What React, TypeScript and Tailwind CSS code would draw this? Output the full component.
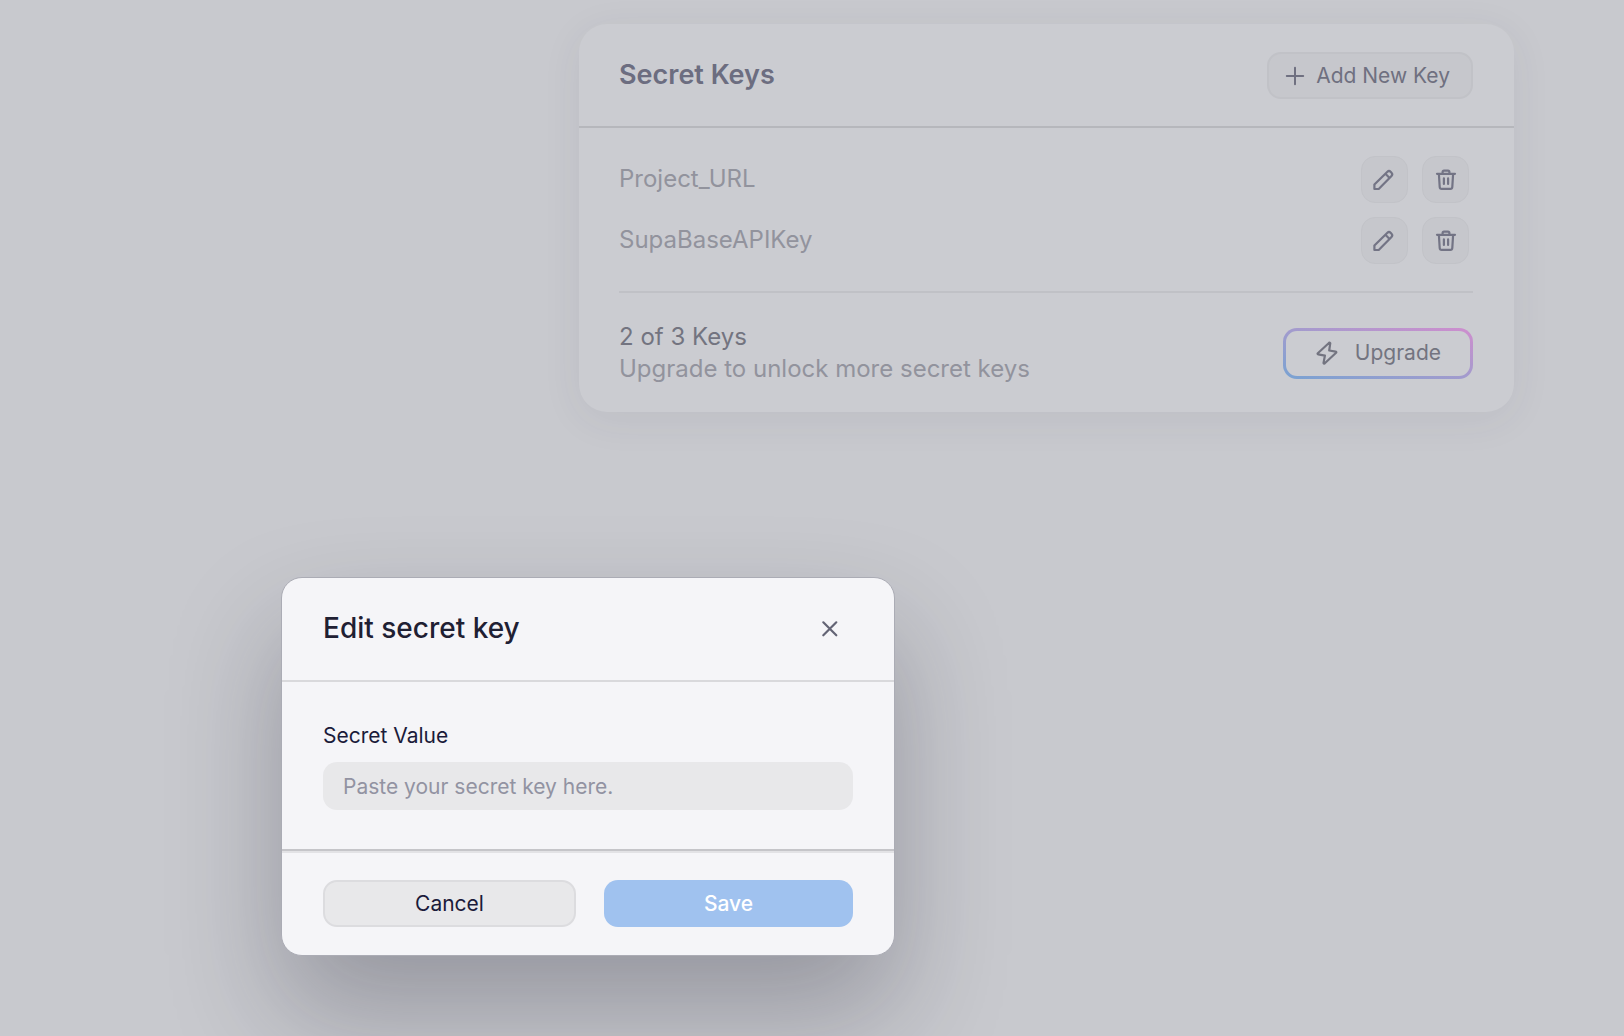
import type { ReactNode } from "react";

const TEXT = {
  title: "Secret Keys",
  addKey: "Add New Key",
  usage: "2 of 3 Keys",
  upgradeHint: "Upgrade to unlock more secret keys",
  upgrade: "Upgrade",
  dialogTitle: "Edit secret key",
  secretValue: "Secret Value",
  placeholder: "Paste your secret key here.",
  cancel: "Cancel",
  save: "Save",
};

const secretKeys = ["Project_URL", "SupaBaseAPIKey"];

function PlusIcon() {
  return (
    <svg className="h-5 w-5" viewBox="0 0 20 20" fill="none" stroke="currentColor" strokeWidth="2" strokeLinecap="round" aria-hidden="true">
      <path d="M10 1.800v16.400M1.800 10h16.400" />
    </svg>
  );
}

function PencilIcon() {
  return (
    <svg className="h-6 w-6" viewBox="2 0 24 24" fill="none" stroke="currentColor" strokeWidth="2.2" strokeLinejoin="round" aria-hidden="true">
      <path d="M3.400 21v-4.500L16.400 3.800a2.300 2.300 0 0 1 3.200 0l.9.9a2.300 2.300 0 0 1 0 3.200L7.700 21H3.400Z" />
      <path d="m14.400 5.800 4.200 4.200" />
    </svg>
  );
}

function TrashIcon() {
  return (
    <svg className="h-6 w-6" viewBox="0 0 24 24" fill="none" stroke="currentColor" strokeWidth="2.200" strokeLinecap="round" strokeLinejoin="round" aria-hidden="true">
      <path d="M3 5.800h18" />
      <path d="m4.900 6 .8 13a2 2 0 0 0 2 1.900h8.600a2 2 0 0 0 2-1.900l.8-13" />
      <path d="M8.600 5.400V4a1.400 1.400 0 0 1 1.400-1.400h4A1.400 1.400 0 0 1 15.400 4v1.400" />
      <path d="M9.900 10.400v5.600M14.100 10.400v5.600" />
    </svg>
  );
}

function BoltIcon() {
  return (
    <svg className="h-6 w-6" viewBox="0 0 24 24" fill="none" stroke="currentColor" strokeWidth="2.2" strokeLinejoin="round" aria-hidden="true">
      <path d="M13.900 2 2.800 12.200a.7.7 0 0 0 .4 1.200l6.700 1.200-1.300 7a.7.7 0 0 0 1.200.7L21.100 11.800a.7.7 0 0 0-.4-1.200l-6.500-1.100 1-6.900a.7.7 0 0 0-1.300-.6Z" />
    </svg>
  );
}

function CloseIcon() {
  return (
    <svg className="h-5 w-5" viewBox="0 0 20 20" fill="none" stroke="currentColor" strokeWidth="2.2" strokeLinecap="round" aria-hidden="true">
      <path d="m3.300 3.300 13 13M16.300 3.300l-13 13" />
    </svg>
  );
}

function IconButton({ label, children }: { label: string; children: ReactNode }) {
  return (
    <button
      type="button"
      aria-label={label}
      className="flex h-[47px] w-[47px] items-center justify-center rounded-[14px] border border-[#c2c3c8] bg-[#c6c7cc] text-[#737485]"
    >
      {children}
    </button>
  );
}

function SecretKeysCard() {
  return (
    <section className="w-full max-w-[935px] rounded-[28px] bg-[#cbccd1] shadow-[0_8px_40px_rgba(60,60,80,0.07)]">
      <header className="flex items-center justify-between border-b-2 border-[#b6b7bc] pt-7 pr-[41px] pb-[27px] pl-10">
        <h1 className="pb-0.5 text-[27px] leading-8 font-semibold text-[#6c6d80]">{TEXT.title}</h1>
        <button
          type="button"
          className="flex h-[47px] items-center gap-[11px] rounded-[14px] border-2 border-[#c1c2c7] bg-[#c6c7cc] pr-[21px] pl-4 text-[21px] leading-6 text-[#6f7080]"
        >
          <PlusIcon />
          {TEXT.addKey}
        </button>
      </header>

      <div className="pt-7 pr-[41px] pb-[27px] pl-10">
        <ul className="flex flex-col gap-[14px] pr-1">
          {secretKeys.map((name) => (
            <li key={name} className="flex items-center justify-between">
              <span className="pb-0.5 text-2xl leading-8 text-[#92939d]">{name}</span>
              <div className="flex gap-[14px]">
                <IconButton label={`Edit ${name}`}>
                  <PencilIcon />
                </IconButton>
                <IconButton label={`Delete ${name}`}>
                  <TrashIcon />
                </IconButton>
              </div>
            </li>
          ))}
        </ul>

        <div className="mt-[27px] flex items-center justify-between border-t-2 border-[#c0c1c6] pt-7">
          <div className="text-2xl leading-8">
            <p className="text-[#737480]">{TEXT.usage}</p>
            <p className="text-[#92939d]">{TEXT.upgradeHint}</p>
          </div>
          <button type="button" className="rounded-[14px] bg-linear-to-tr from-[#78a2d2] via-[#a29bcd] to-[#ce8dce] p-[3px] text-[21px] leading-6 text-[#737480]">
            <span className="flex h-[45px] items-center gap-4 rounded-[11px] bg-[#cbccd1] px-[29px]">
              <BoltIcon />
              {TEXT.upgrade}
            </span>
          </button>
        </div>
      </div>
    </section>
  );
}

function EditSecretDialog() {
  return (
    <div
      role="dialog"
      aria-modal="true"
      aria-labelledby="dialog-title"
      className="absolute top-[577px] left-[281px] w-[614px] rounded-[21px] border border-[#abacb5] bg-[#f5f5f8] shadow-[0_56px_112px_rgba(20,22,40,0.28)]"
    >
      <header className="flex items-center justify-between border-b-2 border-[#d9d9dc] pt-7 pr-[54px] pb-7 pl-[41px]">
        <h2 id="dialog-title" className="pb-0.5 text-[28px] leading-11 font-medium text-[#1f2033]">
          {TEXT.dialogTitle}
        </h2>
        <button type="button" aria-label="Close" className="text-[#636475]">
          <CloseIcon />
        </button>
      </header>

      <form>
        <div className="px-[41px] pt-10 pb-[39px]">
          <label htmlFor="secret-value" className="block text-[21px] leading-7 text-[#1b1b3a]">
            {TEXT.secretValue}
          </label>
          <input
            id="secret-value"
            type="text"
            placeholder={TEXT.placeholder}
            className="mt-3 block h-12 w-full rounded-[14px] bg-[#e8e8ea] px-5 text-[21px] text-[#1b1b3a] outline-none placeholder:text-[#9293a2]"
          />
        </div>
        <div className="flex gap-7 border-t-2 border-[#c5c5c9] px-[41px] pt-[29px] pb-7 shadow-[inset_0_2px_0_#e2e2e5]">
          <button type="button" className="h-[47px] flex-1 rounded-[14px] border-2 border-[#dcdcdf] bg-[#e8e8ea] text-[21px] leading-6 text-[#1b1b3a]">
            {TEXT.cancel}
          </button>
          <button type="submit" className="h-[47px] flex-1 rounded-[14px] bg-[#a0c2ef] text-[21px] leading-6 font-medium text-white">
            {TEXT.save}
          </button>
        </div>
      </form>
    </div>
  );
}

export default function App() {
  return (
    <div className="relative min-h-screen overflow-hidden bg-[#c8c9ce] font-['Inter',sans-serif]">
      <main className="flex justify-end pt-6 pr-[110px] pl-6">
        <SecretKeysCard />
      </main>
      <EditSecretDialog />
    </div>
  );
}
